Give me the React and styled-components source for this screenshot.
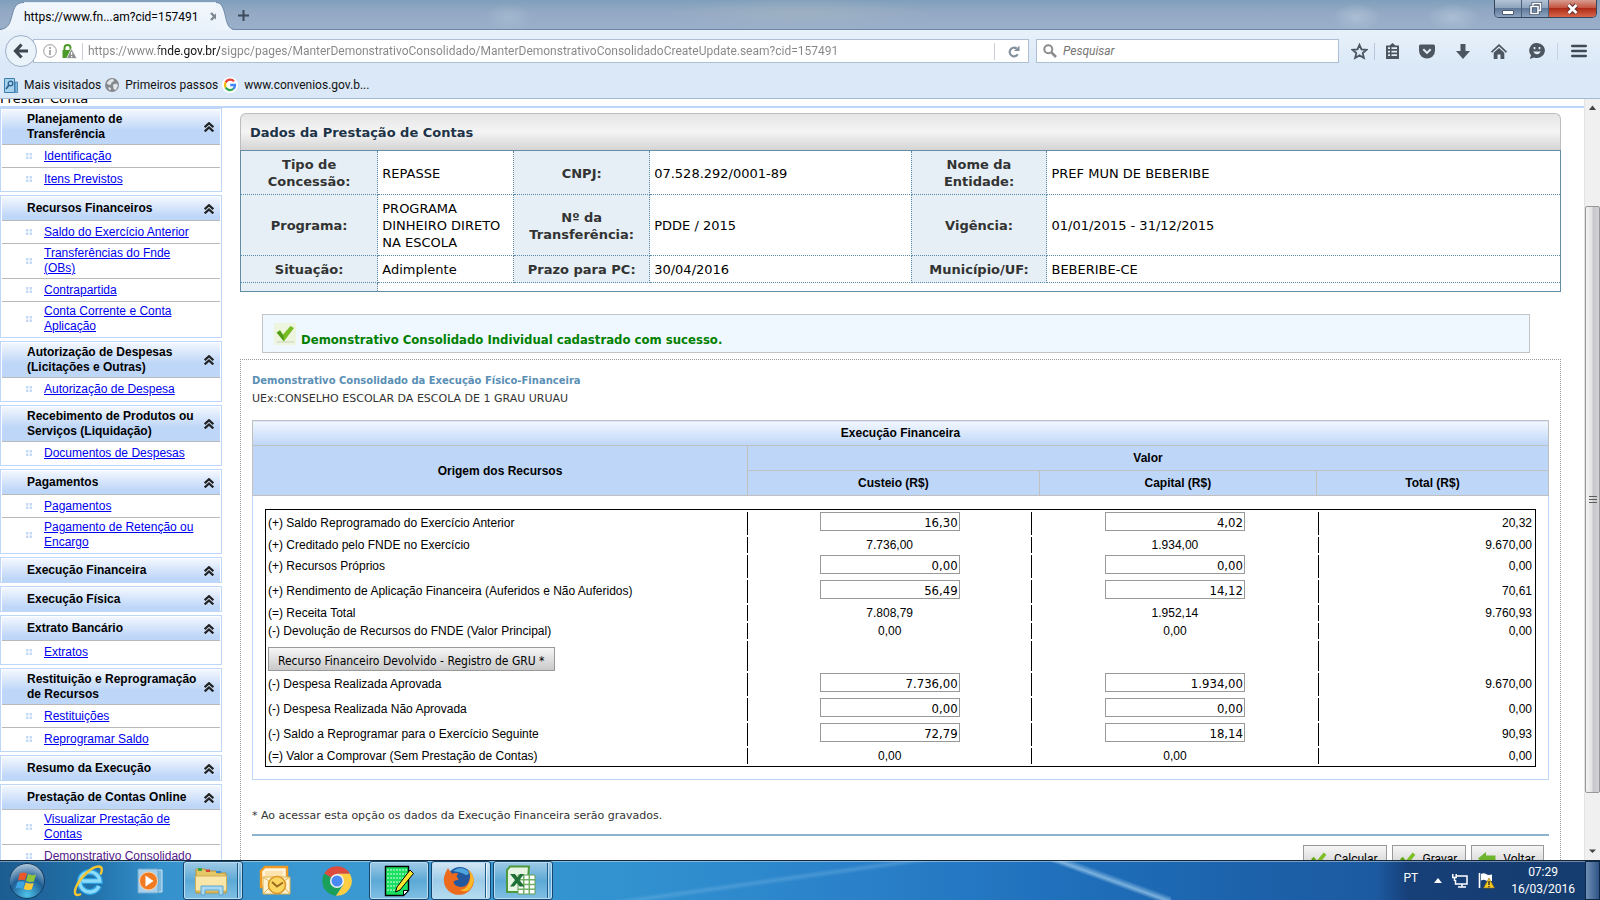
import React, { useState } from 'react';
import styled, { createGlobalStyle, css } from 'styled-components';

const ui = '"Roboto", "Open Sans", sans-serif';
const arial = '"Liberation Sans", Arial, sans-serif';
const verdana = '"DejaVu Sans", Verdana, sans-serif';
const tahoma = '"DejaVu Sans Condensed", "DejaVu Sans", Tahoma, sans-serif';

const GlobalStyle = createGlobalStyle`
  * {
    box-sizing: border-box;
  }
  body {
    margin: 0;
    background: #fff;
    font-family: ${arial};
    font-size: 12px;
    color: #000;
  }
  button, input {
    font: inherit;
    color: inherit;
    margin: 0;
  }
`;

const Screen = styled.div`
  display: flex;
  flex-direction: column;
  height: 100vh;
  overflow: hidden;
`;

/* browser window */

const TitleBar = styled.header`
  display: flex;
  flex: none;
  height: 30px;
  border-bottom: 1px solid #6d87a4;
  background:
    radial-gradient(ellipse 24px 14px at 31.8% 60%, #aec4d880, transparent),
    radial-gradient(ellipse 130px 16px at 50% 45%, #a2b4c2aa, transparent),
    radial-gradient(ellipse 24px 14px at 84.8% 60%, #b4c8daaa, transparent),
    radial-gradient(ellipse 26px 14px at 90.8% 60%, #b4c8daaa, transparent),
    linear-gradient(#7f9fbc, #93a9c3 40%, #9bb0cb);
  font-family: ${ui};
`;

const TabStrip = styled.div`
  display: flex;
  flex: 1;
`;

const Tab = styled.div`
  display: flex;
  height: 30px;
`;

const TabBody = styled.div`
  display: flex;
  align-items: center;
  gap: 12px;
  width: 192px;
  margin-top: 2px;
  border-top: 1px solid #dfe9f5;
  background: linear-gradient(#f2f7fc, #e8f1fa);
  white-space: nowrap;
`;

const TabTitle = styled.span`
  flex: 1;
`;

const PlainButton = styled.button`
  display: flex;
  align-items: center;
  justify-content: center;
  padding: 0;
  border: 0;
  background: none;
  cursor: pointer;
`;

const NewTab = styled(PlainButton)`
  width: 18px;
  height: 30px;
`;

const WindowButtons = styled.div`
  display: flex;
  height: 18px;
  margin-right: 3px;
  border: 1px solid #33465c;
  border-top: 0;
  border-radius: 0 0 5px 5px;
  overflow: hidden;
`;

const WindowButton = styled(PlainButton)`
  width: ${({ $close }) => ($close ? '47px' : '27px')};
  border-right: ${({ $close }) => ($close ? '0' : '1px solid #4b5f78')};
  background: ${({ $close }) => ($close
    ? 'linear-gradient(#d79d90, #c4503c 48%, #ae2b17 50%, #d8664a)'
    : 'linear-gradient(#b4c3d6, #8da2bc 48%, #60799a 50%, #8ea4bf)')};
`;

const Toolbars = styled.div`
  flex: none;
  border-bottom: 1px solid #a3b8d3;
  background: linear-gradient(#e8f1fa, #dae8f7 55%);
  font-family: ${ui};
`;

const NavBar = styled.div`
  display: flex;
  align-items: center;
  height: 42px;
  padding-left: 5px;
`;

const BackButton = styled(PlainButton)`
  flex: none;
  width: 32px;
  height: 32px;
  border: 1px solid #9db0c9;
  border-radius: 50%;
  background: #eaf2fa;
  z-index: 1;
`;

const Field = styled.div`
  display: flex;
  align-items: center;
  height: 24px;
  border: 1px solid #aebfd4;
  background: #fff;
`;

const UrlField = styled(Field)`
  flex: 1;
  gap: 5px;
  margin-left: -4px;
  padding-left: 9px;
`;

const Split = styled.span`
  width: 1px;
  height: 17px;
  background: ${({ $color }) => $color || '#c9ced6'};
`;

const UrlInput = styled.input`
  flex: 1;
  min-width: 0;
  padding: 0;
  border: 0;
  outline: 0;
  font-size: 12px;
  color: transparent;
  background: linear-gradient(90deg, #858585 71px, #111 71px 132px, #858585 132px);
  background-clip: text;
`;

const ReloadButton = styled(PlainButton)`
  width: 28px;
  height: 22px;
`;

const SearchField = styled(Field)`
  flex: none;
  width: 19%;
  gap: 6px;
  margin: 0 5px 0 7px;
  padding-left: 6px;
`;

const SearchInput = styled.input`
  flex: 1;
  min-width: 0;
  padding: 0;
  border: 0;
  outline: 0;
  font-size: 12px;
  &::placeholder {
    color: #757575;
    font-style: italic;
    opacity: 1;
  }
`;

const ToolButton = styled(PlainButton)`
  flex: none;
  width: ${({ $w }) => $w || 36}px;
  height: 24px;
`;

const Bookmarks = styled.nav`
  display: flex;
  gap: 4px;
  height: 26px;
  padding: 0 4px;
  align-items: center;
`;

const Bookmark = styled.a`
  display: flex;
  align-items: center;
  gap: 6px;
  color: #111;
  text-decoration: none;
  white-space: nowrap;
`;

/* page */

const Viewport = styled.div`
  display: flex;
  flex: 1;
  min-height: 0;
`;

const Page = styled.div`
  flex: 1;
  min-width: 0;
  overflow: hidden;
`;

const Crumb = styled.div`
  display: flex;
  align-items: flex-end;
  height: 9px;
  overflow: hidden;
  border-bottom: 2px solid #bed6f8;
  font-family: ${verdana};
  font-size: 13px;
  line-height: 15px;
`;

const Columns = styled.div`
  display: flex;
  align-items: flex-start;
`;

const Sidebar = styled.nav`
  flex: none;
  width: 222px;
  line-height: 15px;
`;

const Group = styled.section`
  margin-bottom: 3px;
  padding: 1px 1px ${({ $empty }) => ($empty ? '0' : '1px')};
  border: 1px solid #bed6f8;
`;

const GroupHeader = styled.button`
  display: flex;
  align-items: center;
  justify-content: space-between;
  width: 100%;
  padding: ${({ $tall }) => ($tall ? '2px' : '4px')} 6px ${({ $tall }) => ($tall ? '2px' : '4px')} 25px;
  border: 0;
  background: linear-gradient(#f2f7ff, #bed6f8 ${({ $tall }) => ($tall ? '60%' : '85%')});
  font-weight: bold;
  text-align: left;
  cursor: pointer;
`;

const MenuList = styled.ul`
  margin: 0;
  padding: 0;
  list-style: none;
`;

const MenuItem = styled.li`
  display: flex;
  align-items: center;
  gap: 12px;
  min-height: 23px;
  padding: 2px 14px 2px 24px;
  border-top: 1px solid #b9b9b9;
`;

const MenuLink = styled.a`
  color: ${({ $visited }) => ($visited ? '#551a8b' : '#0000ee')};
  text-decoration: underline;
`;

const Main = styled.main`
  flex: 1;
  min-width: 0;
  padding: 5px 23px 0 18px;
`;

const PanelTitle = styled.h1`
  height: 37px;
  margin: 0;
  padding: 0 9px;
  border: 1px solid #bdbdbd;
  border-bottom: 0;
  border-radius: 6px 6px 0 0;
  background: linear-gradient(#e6e6e6, #f4f4f4 50%, #d4d4d4);
  color: #1d3347;
  font: bold 13px/37px ${verdana};
`;

const InfoTable = styled.table`
  width: 100%;
  table-layout: fixed;
  border-collapse: collapse;
  border: 1px solid #648ca5;
  font: 13px/17px ${verdana};

  th, td {
    padding: 5px 4px 4px;
    border: 1px dotted #5a8bad;
  }
  th {
    background: #e5eff5;
    color: #333;
  }
  tr:last-child th, tr:last-child td {
    height: 9px;
    padding: 0;
  }
`;

const Notice = styled.div`
  display: flex;
  align-items: center;
  gap: 5px;
  height: 39px;
  margin: 22px 31px 6px 22px;
  padding: 0 11px;
  border: 1px solid #c4c4c4;
  background: #f0f8ff;
  color: #008000;
  font: bold 13px/16px ${tahoma};

  p {
    margin: 12px 0 0;
  }
`;

const Sheet = styled.section`
  padding: 12px 11px 30px;
  border: 1px dotted #999;
`;

const SheetTitle = styled.h2`
  margin: 0;
  color: #5a8fb5;
  font: bold 10px/18px ${verdana};
`;

const Small = styled.p`
  margin: 0;
  color: #333;
  font: 11px/18px ${verdana};
`;

const HeadTable = styled.table`
  width: 100%;
  margin-top: 12px;
  table-layout: fixed;
  border-collapse: collapse;

  > thead > tr > th {
    height: 25px;
    padding: 0;
    border: 1px solid #c0c0c0;
    background: #bed6f8;
  }
  > thead > tr:first-child > th {
    background: linear-gradient(#f2f7ff, #bed6f8);
  }
  > tbody > tr > td {
    padding: 13px 12px 12px;
    border: 1px solid #bed6f8;
  }
`;

const Ledger = styled.table`
  width: 100%;
  table-layout: fixed;
  border: 1px solid #000;
  border-spacing: 2px;
  line-height: 15px;
`;

const Line = styled.tr`
  height: ${({ $h }) => $h}px;
`;

const Label = styled.th`
  padding: 0;
  font-weight: normal;
  text-align: left;
  vertical-align: ${({ $bottom }) => ($bottom ? 'bottom' : 'middle')};
`;

const Amount = styled.td`
  padding: 0 1px 0 3px;
  border-left: 1px solid #000;
  text-align: ${({ $right }) => ($right ? 'right' : 'center')};
  vertical-align: ${({ $top }) => ($top ? 'top' : 'middle')};
`;

const AmountInput = styled.input`
  display: block;
  width: 140px;
  height: 19px;
  margin: 0 auto;
  padding: 1px 1px 0;
  border: 1px solid #999;
  background: #fff;
  font-family: ${tahoma};
  font-size: 13px;
  text-align: right;
`;

const grey = css`
  border: 1px solid #999;
  background: linear-gradient(#f6f6f6, #c9c9c9);
  font-size: 12px;
  white-space: nowrap;
  cursor: pointer;
`;

const GruButton = styled.button`
  ${grey}
  display: block;
  height: 24px;
  padding: 4px 9px 0;
  font-family: ${tahoma};
`;

const Footnote = styled(Small)`
  margin-top: 27px;
  padding-bottom: 9px;
  border-bottom: 2px solid #8cb3ce;
`;

const Actions = styled.div`
  display: flex;
  justify-content: flex-end;
  gap: 5px;
  padding: 9px 5px 0;
`;

const ActionButton = styled.button`
  ${grey}
  display: flex;
  align-items: center;
  gap: 7px;
  height: 28px;
  padding: 0 8px 0 6px;
  font-family: ${ui};
`;

const ScrollBar = styled.div`
  display: flex;
  flex: none;
  flex-direction: column;
  width: 16px;
  border-left: 1px solid #e3e3e3;
  background: #f0f0f0;
`;

const Track = styled.div`
  flex: ${({ $grow }) => $grow} 1 0;
`;

const Thumb = styled.div`
  display: flex;
  flex: 587 1 0;
  align-items: center;
  justify-content: center;
  border: 1px solid #979797;
  border-radius: 2px;
  background: linear-gradient(90deg, #f4f4f4, #e2e2e4 45%, #c8c8cc 55%, #d2d2d6);
`;

/* taskbar */

const TaskBar = styled.footer`
  display: flex;
  flex: none;
  gap: 2px;
  height: 40px;
  border-top: 1px solid #14263a;
  box-shadow: inset 0 1px 0 #ffffff66;
  background:
    linear-gradient(20deg, transparent 46%, #a9d4f1aa 51%, transparent 58%) 71% 0 / 120px 40px no-repeat,
    linear-gradient(172deg, transparent 46%, #7cbbe655 50%, transparent 54%) 560px 0 / 420px 40px no-repeat,
    linear-gradient(90deg, #1c5c90, #2273ac 6%, #3692cc 10%, #3b99d2 22%, #3293d0 38%, #2a80c9 54%, #1f6fbb 67%, #1c62ab 78%, #1c5aa0 86%, #174079 88%, #153c6d);
  color: #fff;
  font-family: ${ui};
`;

const StartButton = styled(PlainButton)`
  width: 57px;
`;

const TaskButton = styled(PlainButton)`
  width: 60px;
  ${({ $open }) => $open && css`
    border: 1px solid #17466c;
    border-radius: 3px;
    box-shadow: inset 0 0 0 1px #b9dcf2;
    background: linear-gradient(#9fcbe6, #5ca9d6 50%, #7fc0e4);
  `}
  ${({ $stack }) => $stack && css`
    padding-right: 5px;
    background: linear-gradient(90deg, transparent 53px, #1f5d88 53px 54px, #b9dcf2 54px 55px, transparent 55px),
      linear-gradient(#9fcbe6, #5ca9d6 50%, #7fc0e4);
  `}
  ${({ $active }) => $active && css`
    background: linear-gradient(90deg, transparent 53px, #1f5d88 53px 54px, #e5f3fb 54px 55px, transparent 55px),
      linear-gradient(#d4e8f5, #9dcbe8 50%, #b5dcf0);
  `}
`;

const Tray = styled.div`
  display: flex;
  align-items: center;
  gap: 10px;
  margin-left: auto;
`;

const Language = styled.span`
  padding: 0 6px 6px 0;
`;

const Clock = styled.time`
  padding-left: 6px;
  line-height: 17px;
  text-align: center;
`;

const ShowDesktop = styled.button`
  width: 15px;
  height: 39px;
  padding: 0;
  border: 1px solid #0d2747;
  background: linear-gradient(90deg, #6f8fb5, #2f5585);
`;

const menu = [
  { title: ['Planejamento de', 'Transferência'], items: [['Identificação'], ['Itens Previstos']] },
  {
    title: ['Recursos Financeiros'],
    items: [['Saldo do Exercício Anterior'], ['Transferências do Fnde', '(OBs)'], ['Contrapartida'], ['Conta Corrente e Conta', 'Aplicação']],
  },
  { title: ['Autorização de Despesas', '(Licitações e Outras)'], items: [['Autorização de Despesa']] },
  { title: ['Recebimento de Produtos ou', 'Serviços (Liquidação)'], items: [['Documentos de Despesas']] },
  { title: ['Pagamentos'], items: [['Pagamentos'], ['Pagamento de Retenção ou', 'Encargo']] },
  { title: ['Execução Financeira'], items: [] },
  { title: ['Execução Física'], items: [] },
  { title: ['Extrato Bancário'], items: [['Extratos']] },
  { title: ['Restituição e Reprogramação', 'de Recursos'], items: [['Restituições'], ['Reprogramar Saldo']] },
  { title: ['Resumo da Execução'], items: [] },
  {
    title: ['Prestação de Contas Online'],
    items: [['Visualizar Prestação de', 'Contas'], ['Demonstrativo Consolidado']],
    visited: 1,
  },
];

const ledger = [
  { label: '(+) Saldo Reprogramado do Exercício Anterior', values: ['16,30', '4,02', '20,32'], edit: true },
  { label: '(+) Creditado pelo FNDE no Exercício', values: ['7.736,00', '1.934,00', '9.670,00'] },
  { label: '(+) Recursos Próprios', values: ['0,00', '0,00', '0,00'], edit: true },
  { label: '(+) Rendimento de Aplicação Financeira (Auferidos e Não Auferidos)', values: ['56,49', '14,12', '70,61'], edit: true },
  { label: '(=) Receita Total', values: ['7.808,79', '1.952,14', '9.760,93'] },
  { label: '(-) Devolução de Recursos do FNDE (Valor Principal)', values: ['0,00', '0,00', '0,00'] },
  { button: 'Recurso Financeiro Devolvido - Registro de GRU *', values: ['', '', ''] },
  { label: '(-) Despesa Realizada Aprovada', values: ['7.736,00', '1.934,00', '9.670,00'], edit: true },
  { label: '(-) Despesa Realizada Não Aprovada', values: ['0,00', '0,00', '0,00'], edit: true },
  { label: '(-) Saldo a Reprogramar para o Exercício Seguinte', values: ['72,79', '18,14', '90,93'], edit: true },
  { label: '(=) Valor a Comprovar (Sem Prestação de Contas)', values: ['0,00', '0,00', '0,00'] },
];

const lines = (parts) => parts.map((part, i) => (
  <React.Fragment key={part}>
    {i > 0 && <br />}
    {part}
  </React.Fragment>
));

const Chevrons = () => (
  <svg width="10" height="10" viewBox="0 0 10 10" fill="none" stroke="#222" strokeWidth="2.200">
    <path d="M.7 5.2 5 1.2l4.3 4M.7 9.4 5 5.4l4.3 4" />
  </svg>
);

const Dots = () => (
  <svg width="6" height="6" viewBox="0 0 6 6" fill="#c3d9f7">
    <path d="M0 0h2.4v2.4H0zM3.6 0H6v2.4H3.6zM0 3.6h2.4V6H0zM3.6 3.6H6V6H3.6z" />
  </svg>
);

const Check = ({ size = 18 }) => (
  <svg width={size} height={size} viewBox="0 0 18 18">
    <path d="M1 8.5 4.2 6l3.2 4L14.5 1.5 17.3 4 7.6 16.5z" fill="#7cc025" />
    <path d="M1.8 8.6 4 7l3.4 4.4L7.6 16z" fill="#58a01c" />
  </svg>
);

const BackArrow = () => (
  <svg width="18" height="16" viewBox="0 0 18 16">
    <path d="M0 7.5 8 1v3.5h9.5v8H8V15z" fill="#6db52c" />
  </svg>
);

function SideMenu() {
  const [closed, setClosed] = useState({});
  const toggle = (key) => setClosed({ ...closed, [key]: !closed[key] });

  return (
    <Sidebar>
      {menu.map(({ title, items, visited }) => {
        const key = title[0];
        const shown = closed[key] ? [] : items;
        return (
          <Group key={key} $empty={!shown.length}>
            <GroupHeader type="button" $tall={title.length > 1} onClick={() => toggle(key)}>
              <span>{lines(title)}</span>
              <Chevrons />
            </GroupHeader>
            {shown.length > 0 && (
              <MenuList>
                {shown.map((item, i) => (
                  <MenuItem key={item[0]}>
                    <Dots />
                    <MenuLink href="#" $visited={visited === i}>{lines(item)}</MenuLink>
                  </MenuItem>
                ))}
              </MenuList>
            )}
          </Group>
        );
      })}
    </Sidebar>
  );
}

function LedgerRow({ label, button, values, edit }) {
  let height = 16;
  if (edit) height = 23;
  if (button) height = 30;
  const columns = ['Custeio', 'Capital'];

  return (
    <Line $h={height}>
      <Label scope="row" $bottom={!!button}>
        {button ? <GruButton type="button">{button}</GruButton> : label}
      </Label>
      {columns.map((column, i) => (
        <Amount key={column} $top={edit}>
          {edit
            ? <AmountInput type="text" aria-label={`${label} - ${column}`} defaultValue={values[i]} />
            : values[i]}
        </Amount>
      ))}
      <Amount $right>{values[2]}</Amount>
    </Line>
  );
}

function Browser() {
  return (
    <>
      <TitleBar>
        <TabStrip>
          <Tab>
            <svg width="24" height="30" viewBox="0 0 24 30">
              <path d="M0 30C10 28 10 22 13 12 15 5 18 2.5 24 2.5V30z" fill="#edf4fb" />
              <path d="M0 29.500C10 28 10 22 13 12 15 5 18 2.500 24 2.500" fill="none" stroke="#7089a6" />
            </svg>
            <TabBody>
              <TabTitle>https://www.fn...am?cid=157491</TabTitle>
              <PlainButton type="button" aria-label="Fechar aba">
                <svg width="9" height="9" viewBox="0 0 9 9" stroke="#7d8791" strokeWidth="2.400">
                  <path d="M1 1l7 7M8 1 1 8" />
                </svg>
              </PlainButton>
            </TabBody>
            <svg width="18" height="30" viewBox="0 0 18 30">
              <path d="M0 2.500c5 0 7 4 9 12 2 9 3 14 9 15.500H0z" fill="#edf4fb" />
              <path d="M0 2.500c5 0 7 4 9 12 2 9 3 13.500 9 15" fill="none" stroke="#7089a6" />
            </svg>
          </Tab>
          <NewTab type="button" aria-label="Nova aba">
            <svg width="11" height="11" viewBox="0 0 11 11" stroke="#3c4a59" strokeWidth="2">
              <path d="M5.500 0v11M0 5.500h11" />
            </svg>
          </NewTab>
        </TabStrip>
        <WindowButtons>
          <WindowButton type="button" aria-label="Minimizar">
            <svg width="12" height="14" viewBox="0 0 12 14"><path d="M.5 8.500h11v4H.5z" fill="#fff" stroke="#4a5a70" /></svg>
          </WindowButton>
          <WindowButton type="button" aria-label="Restaurar">
            <svg width="13" height="13" viewBox="0 0 13 13" fill="none">
              <path d="M4 3.500V1.500h7.500v7h-2M2 4.500h7v7H2z" stroke="#3f5068" strokeWidth="3" />
              <path d="M4 3.500V1.500h7.500v7h-2M2 4.500h7v7H2z" stroke="#fff" strokeWidth="1.600" />
            </svg>
          </WindowButton>
          <WindowButton type="button" aria-label="Fechar" $close>
            <svg width="13" height="12" viewBox="0 0 13 12">
              <path d="M2.500 2l8 8M10.500 2l-8 8" stroke="#5b2a2a" strokeWidth="4.600" />
              <path d="M2.500 2l8 8M10.500 2l-8 8" stroke="#fff" strokeWidth="2.800" />
            </svg>
          </WindowButton>
        </WindowButtons>
      </TitleBar>
      <Toolbars>
        <NavBar>
          <BackButton type="button" aria-label="Voltar uma página">
            <svg width="16" height="16" viewBox="0 0 16 16" fill="none" stroke="#3d4650" strokeWidth="3.200">
              <path d="M8.500 1.500 2.500 8l6 6.500M2.500 8H15" />
            </svg>
          </BackButton>
          <UrlField>
            <svg width="14" height="14" viewBox="0 0 14 14" fill="none" stroke="#999">
              <circle cx="7" cy="7" r="6.300" />
              <path d="M7 6v5M7 3v2" strokeWidth="1.600" />
            </svg>
            <svg width="15" height="15" viewBox="0 0 15 15">
              <path d="M2.500 7V4a3 3 0 0 1 6 0v3" fill="none" stroke="#4c9a2a" strokeWidth="2" />
              <path d="M.5 6h9.500v8H.5z" fill="#4c9a2a" />
              <path d="M9.500 4.500 15 14.500H4.500z" fill="#8f8f8f" stroke="#fff" strokeWidth=".7" />
              <path d="M9.600 8v3M9.600 12v1.300" stroke="#fff" strokeWidth="1.200" />
            </svg>
            <Split />
            <UrlInput
              type="text"
              aria-label="Endereço"
              defaultValue="https://www.fnde.gov.br/sigpc/pages/ManterDemonstrativoConsolidado/ManterDemonstrativoConsolidadoCreateUpdate.seam?cid=157491"
            />
            <Split />
            <ReloadButton type="button" aria-label="Recarregar">
              <svg width="12" height="13" viewBox="0 0 12 13">
                <path d="M9.700 9.200A4.300 4.300 0 1 1 8.500 3.500" fill="none" stroke="#848f9c" strokeWidth="2.200" />
                <path d="M11.500.5v5.500H6z" fill="#848f9c" />
              </svg>
            </ReloadButton>
          </UrlField>
          <SearchField>
            <svg width="14" height="14" viewBox="0 0 14 14" fill="none" stroke="#8d8d8d">
              <circle cx="5.300" cy="5.300" r="4" strokeWidth="2" />
              <path d="M8.500 8.500 13 13" strokeWidth="2.600" />
            </svg>
            <SearchInput type="text" aria-label="Pesquisar" placeholder="Pesquisar" />
          </SearchField>
          <ToolButton type="button" aria-label="Favoritar" $w={30}>
            <svg width="17" height="17" viewBox="0 0 17 17" fill="none" stroke="#4b5660" strokeWidth="1.800">
              <path d="m8.500 1.800 2 4.600 5 .4-3.800 3.300 1.200 4.900-4.400-2.600-4.400 2.600 1.200-4.900L1.500 6.800l5-.4z" />
            </svg>
          </ToolButton>
          <Split $color="#b7c6d8" />
          <ToolButton type="button" aria-label="Lista de favoritos" $w={34}>
            <svg width="15" height="16" viewBox="0 0 15 16">
              <path d="M4.500 2.500 7.500 0l3 2.500H14V16H1V2.500z" fill="#4b5660" />
              <path d="M3 5.200h2M3 8.700h2M3 12.200h2M6.500 5.200h5.500M6.500 8.700h5.500M6.500 12.200h5.500" stroke="#e4edf7" strokeWidth="1.700" />
            </svg>
          </ToolButton>
          <ToolButton type="button" aria-label="Salvar no Pocket">
            <svg width="16" height="15" viewBox="0 0 16 15">
              <path d="M1.500.5h13Q16 .5 16 2v4.500a8 8 0 0 1-16 0V2Q0 .5 1.500.5z" fill="#4b5660" />
              <path d="m4.300 5.300 3.700 3.600 3.700-3.600" fill="none" stroke="#e4edf7" strokeWidth="2" />
            </svg>
          </ToolButton>
          <ToolButton type="button" aria-label="Downloads">
            <svg width="14" height="15" viewBox="0 0 14 15"><path d="M4.500 0h5v7H14l-7 8-7-8h4.500z" fill="#4b5660" /></svg>
          </ToolButton>
          <ToolButton type="button" aria-label="Página inicial">
            <svg width="16" height="15" viewBox="0 0 16 15">
              <path d="M.5 8.200 8 1.200l7.500 7" fill="none" stroke="#4b5660" strokeWidth="1.800" />
              <path d="M2.700 8.800 8 4l5.300 4.800V15H9.500v-4.500h-3V15H2.700z" fill="#4b5660" />
            </svg>
          </ToolButton>
          <ToolButton type="button" aria-label="Bate-papo" $w={40}>
            <svg width="16" height="16" viewBox="0 0 16 16">
              <path d="M8 0a8 7.500 0 1 1-3 14.500L.8 16l1.200-3.700A7.500 7.500 0 0 1 8 0z" fill="#4b5660" />
              <path d="M4 8.500q4 5.500 8 0z" fill="#e4edf7" />
              <path d="M5.500 4v2.200M10.500 4v2.200" stroke="#e4edf7" strokeWidth="1.700" />
            </svg>
          </ToolButton>
          <Split $color="#c4d2e3" />
          <ToolButton type="button" aria-label="Abrir menu" $w={42}>
            <svg width="16" height="14" viewBox="0 0 16 14" stroke="#3f4a55" strokeWidth="2.600" strokeLinecap="round">
              <path d="M1.300 2h13.400M1.300 7h13.400M1.300 12h13.400" />
            </svg>
          </ToolButton>
        </NavBar>
        <Bookmarks>
          <Bookmark href="#">
            <svg width="14" height="15" viewBox="0 0 14 15">
              <path d="M.5.500h10v14H.5z" fill="#a6d2ee" stroke="#3f7fae" />
              <path d="M11 4h2.500v10.500H11z" fill="#7eb6dc" stroke="#3f7fae" strokeWidth=".8" />
              <circle cx="6.500" cy="5.500" r="2.300" fill="none" stroke="#2a5f8d" strokeWidth="1.300" />
              <path d="m5 7-3 4" stroke="#2a5f8d" strokeWidth="1.600" />
            </svg>
            Mais visitados
          </Bookmark>
          <Bookmark href="#">
            <svg width="14" height="14" viewBox="0 0 14 14">
              <circle cx="7" cy="7" r="7" fill="#84898e" />
              <path d="M5 1.500 8 1l1 2-2.500 1.500L5.500 7 3 6.500 1.500 5zM8 6.500l3.500-1 1.500 2-2 4.500-2.500-1zM3.500 9l2.500 1-.5 2.500-2-1.500z" fill="#e3e6e9" />
            </svg>
            Primeiros passos
          </Bookmark>
          <Bookmark href="#">
            <svg width="16" height="16" viewBox="0 0 16 16" fill="none" strokeWidth="2.300">
              <circle cx="8" cy="8" r="8" fill="#fff" />
              <path d="M12 4.300A5.100 5.100 0 0 0 3.600 5.500" stroke="#ea4335" />
              <path d="M3.600 5.500a5.100 5.100 0 0 0 0 5" stroke="#fbbc05" />
              <path d="M3.600 10.500a5.100 5.100 0 0 0 7.700 1.400" stroke="#34a853" />
              <path d="M11.300 11.900A5 5 0 0 0 13 8H8.200" stroke="#4285f4" />
            </svg>
            www.convenios.gov.b...
          </Bookmark>
        </Bookmarks>
      </Toolbars>
    </>
  );
}

function AccountInfo() {
  return (
    <>
      <PanelTitle>Dados da Prestação de Contas</PanelTitle>
      <InfoTable>
        <colgroup>
          <col style={{ width: '10.4%' }} />
          <col style={{ width: '10.3%' }} />
          <col style={{ width: '10.3%' }} />
          <col style={{ width: '19.8%' }} />
          <col style={{ width: '10.3%' }} />
          <col />
        </colgroup>
        <tbody>
          <tr>
            <th scope="row">Tipo de Concessão:</th>
            <td>REPASSE</td>
            <th scope="row">CNPJ:</th>
            <td>07.528.292/0001-89</td>
            <th scope="row">Nome da Entidade:</th>
            <td>PREF MUN DE BEBERIBE</td>
          </tr>
          <tr>
            <th scope="row">Programa:</th>
            <td>PROGRAMA DINHEIRO DIRETO NA ESCOLA</td>
            <th scope="row">Nº da Transferência:</th>
            <td>PDDE / 2015</td>
            <th scope="row">Vigência:</th>
            <td>01/01/2015 - 31/12/2015</td>
          </tr>
          <tr>
            <th scope="row">Situação:</th>
            <td>Adimplente</td>
            <th scope="row">Prazo para PC:</th>
            <td>30/04/2016</td>
            <th scope="row">Município/UF:</th>
            <td>BEBERIBE-CE</td>
          </tr>
          <tr>
            <th />
            <td colSpan={5} />
          </tr>
        </tbody>
      </InfoTable>
    </>
  );
}

function Statement() {
  return (
    <Sheet>
      <SheetTitle>Demonstrativo Consolidado da Execução Físico-Financeira</SheetTitle>
      <Small>UEx:CONSELHO ESCOLAR DA ESCOLA DE 1 GRAU URUAU</Small>
      <HeadTable>
        <colgroup>
          <col style={{ width: '38.2%' }} />
          <col style={{ width: '22.5%' }} />
          <col style={{ width: '21.4%' }} />
          <col />
        </colgroup>
        <thead>
          <tr>
            <th colSpan={4}>Execução Financeira</th>
          </tr>
          <tr>
            <th rowSpan={2}>Origem dos Recursos</th>
            <th colSpan={3}>Valor</th>
          </tr>
          <tr>
            <th>Custeio (R$)</th>
            <th>Capital (R$)</th>
            <th>Total (R$)</th>
          </tr>
        </thead>
        <tbody>
          <tr>
            <td colSpan={4}>
              <Ledger>
                <colgroup>
                  <col style={{ width: '37.9%' }} />
                  <col style={{ width: '22.4%' }} />
                  <col style={{ width: '22.6%' }} />
                  <col />
                </colgroup>
                <tbody>
                  {ledger.map((row) => <LedgerRow key={row.label || row.button} {...row} />)}
                </tbody>
              </Ledger>
            </td>
          </tr>
        </tbody>
      </HeadTable>
      <Footnote>* Ao acessar esta opção os dados da Execução Financeira serão gravados.</Footnote>
      <Actions>
        <ActionButton type="button"><Check size={17} />Calcular</ActionButton>
        <ActionButton type="button"><Check size={17} />Gravar</ActionButton>
        <ActionButton type="button"><BackArrow />Voltar</ActionButton>
      </Actions>
    </Sheet>
  );
}

function Taskbar() {
  return (
    <TaskBar>
      <StartButton type="button" aria-label="Iniciar">
        <svg width="38" height="38" viewBox="0 0 38 38">
          <defs>
            <radialGradient id="orb" cx=".5" cy=".9" r=".9">
              <stop offset="0" stopColor="#4fc3ea" />
              <stop offset=".55" stopColor="#1f5f96" />
              <stop offset="1" stopColor="#b5cbdc" />
            </radialGradient>
          </defs>
          <circle cx="17" cy="19" r="17.500" fill="url(#orb)" stroke="#12395c" />
          <path d="M9.500 11.500q4-2 7.500 0l-2 7q-3-1.500-7 .200z" fill="#e8582b" />
          <path d="M18 12q3.500 2 8 .5l-2 7q-4 1.200-8-.5z" fill="#8fc43c" />
          <path d="M7.500 20q4-1.700 7.200 0l-2 6.500q-3-1.500-7-.2z" fill="#3fa4e4" />
          <path d="M15.700 20.500q3.800 1.800 8 .4l-2 6.500q-4 1.200-8-.5z" fill="#fbc935" />
        </svg>
      </StartButton>
      <TaskButton type="button" aria-label="Internet Explorer">
        <svg width="32" height="32" viewBox="0 0 32 32" fill="none">
          <path d="M26 21a10 10 0 1 1 .8-5H9" stroke="#2b9fe0" strokeWidth="6" />
          <path d="M26 21a10 10 0 1 1 .8-5H9" stroke="#8bdcfa" strokeWidth="3.400" />
          <path d="M8 29C2 32 0 28 4 20S19 1 26 1.500c4 .5 3 5 1.500 8" stroke="#f6c630" strokeWidth="2.400" />
        </svg>
      </TaskButton>
      <TaskButton type="button" aria-label="Windows Media Player">
        <svg width="28" height="26" viewBox="0 0 28 26">
          <path d="M20 2h5v22h-5z" fill="#7fb9dd" stroke="#cfe6f4" />
          <path d="M1 1h20v24H1z" fill="#a8d0ea" stroke="#6ea9d0" />
          <circle cx="11.500" cy="13" r="9" fill="#f07b22" stroke="#fbd3ad" />
          <path d="m8.500 7.500 8 5.500-8 5.500z" fill="#fff" />
        </svg>
      </TaskButton>
      <TaskButton type="button" aria-label="Windows Explorer" $open $stack>
        <svg width="34" height="32" viewBox="0 0 34 32">
          <path d="M2 4h9l1 2h10l1 2h9v20H2z" fill="#e6c766" stroke="#b8953a" />
          <path d="M4 3h4v3H4z" fill="#3aa64a" />
          <path d="M12 4.500h4V7h-4z" fill="#d8442f" />
          <path d="M22 6h5v2h-5z" fill="#3a86d0" />
          <path d="M1.500 11h31v15h-31z" fill="#f8e7a8" stroke="#cfae55" />
          <path d="M7 30V21h22v9h-4v-5H11v5z" fill="#a9d8f2" stroke="#5da3cf" />
        </svg>
      </TaskButton>
      <TaskButton type="button" aria-label="Outlook">
        <svg width="32" height="32" viewBox="0 0 32 32">
          <path d="M6 2h22v20H2V6z" fill="#fff4dc" stroke="#ee9a26" strokeWidth="2.400" />
          <path d="M6 6h18v6H6z" fill="#fde3b0" />
          <path d="M4 12h27v17H4z" fill="#fdf3d3" stroke="#e0b04a" />
          <path d="M4 12l13 9 14-9M4 29l9-9M31 29l-8-9" fill="none" stroke="#e0b04a" />
          <circle cx="18" cy="20" r="8.500" fill="#fcd662" stroke="#d9982a" strokeWidth="1.600" />
          <path d="m13 17 5 4.500 6-4" fill="none" stroke="#9c6a20" strokeWidth="2" />
        </svg>
      </TaskButton>
      <TaskButton type="button" aria-label="Chrome">
        <svg width="30" height="30" viewBox="0 0 30 30">
          <path d="M15 15 2.200 7.500A14.800 14.800 0 0 1 27.900 7.700H15z" fill="#dd4b3e" />
          <path d="M15 15 2.200 7.500A14.800 14.800 0 0 0 14 29.700l6.500-11z" fill="#1ba05c" />
          <path d="M15 7.700h12.900A14.800 14.800 0 0 1 14 29.700l7.300-11z" fill="#ffce43" />
          <circle cx="15" cy="15" r="7" fill="#f2f2f2" />
          <circle cx="15" cy="15" r="5.500" fill="#4a8af4" />
        </svg>
      </TaskButton>
      <TaskButton type="button" aria-label="Bloco de notas" $open>
        <svg width="30" height="32" viewBox="0 0 30 32">
          <path d="M1.500 1.500h23v24l-5 5h-18z" fill="#19e060" stroke="#000" strokeWidth="1.400" />
          <path d="M3 5h20M3 9h20M3 13h20M3 17h18M3 21h14M3 25h10" stroke="#d9ffe4" strokeDasharray="2 1" />
          <path d="m26 5 3.500 3.500L16 25l-4.500 2L13 22z" fill="#fbe52e" stroke="#000" />
          <path d="M19.500 30.500v-5h5z" fill="#fff" stroke="#000" />
        </svg>
      </TaskButton>
      <TaskButton type="button" aria-label="Firefox" $open $stack $active>
        <svg width="32" height="32" viewBox="0 0 32 32">
          <circle cx="17" cy="15" r="13" fill="#23589f" />
          <path d="M10 6q8-6 15 0 2 4-2 4-5-3-13-4z" fill="#4fa6dc" />
          <path d="M5 3q-5 8-4 14a15 14.500 0 0 0 29.800 0Q31 9 25 4.500 28 9 26.500 14 25 21.500 18.500 22 11 21.500 10.500 16.500q2-2 5-1.500-.5-2.500-2-3.500 1-2 2-3Q11 7.500 9.500 9 6.500 6.500 5 3z" fill="#ec6a1e" />
          <path d="M30.800 16q-.5-7-5.800-11.500Q29 11 26 18q-3 7-9 7 10 5 13.800-9z" fill="#fbb829" />
        </svg>
      </TaskButton>
      <TaskButton type="button" aria-label="Excel" $open $stack>
        <svg width="32" height="32" viewBox="0 0 32 32">
          <path d="M5 1.500h19L22 27H2V5z" fill="#e9f5e3" stroke="#4c9a3c" strokeWidth="2" />
          <path d="M13 10h17v19H13z" fill="#fff" stroke="#5e9e54" />
          <path d="M13 14.700h17M13 19.500h17M13 24.300h17M18.700 10v19M24.300 10v19" stroke="#6fae63" strokeWidth="1.500" />
          <path d="M5 9h5l2.500 3.500L15 9h4l-4.500 6 5 6.500h-5L12 18l-3 3.500H5L10 15z" fill="#1f7036" />
        </svg>
      </TaskButton>
      <Tray>
        <Language>PT</Language>
        <svg width="8" height="5" viewBox="0 0 8 5"><path d="M4 0l4 5H0z" fill="#fff" /></svg>
        <svg width="16" height="15" viewBox="0 0 16 15" fill="none" stroke="#fff" strokeWidth="1.500">
          <path d="M5 3h10v8H3.500V7M6 14h8M10 11v3M.8 1v3.500h3.400V1M2.500 4.500V8" />
        </svg>
        <svg width="17" height="17" viewBox="0 0 17 17">
          <path d="M1.500 1v15" stroke="#fff" strokeWidth="1.600" />
          <path d="M3 2q3-1.500 5 0t6 .5V9q-4 1-6-.5T3 8.500z" fill="#fff" />
          <path d="m11 6 5.500 10h-11z" fill="#f5c926" stroke="#8a6a0c" strokeWidth=".6" />
          <path d="M11 9v4M11 14v1.300" stroke="#222" strokeWidth="1.300" />
        </svg>
        <Clock>
          07:29
          <br />
          16/03/2016
        </Clock>
        <ShowDesktop type="button" aria-label="Mostrar área de trabalho" />
      </Tray>
    </TaskBar>
  );
}

export default function App() {
  return (
    <Screen>
      <GlobalStyle />
      <Browser />
      <Viewport>
        <Page>
          <Crumb>Prestar Conta</Crumb>
          <Columns>
            <SideMenu />
            <Main>
              <AccountInfo />
              <Notice>
                <svg width="22" height="22" viewBox="0 0 22 22">
                  <path d="M0 0h22v22H0z" fill="#edf5df" />
                  <path d="M3 18.500h17v1H3z" fill="#c9d0c0" />
                  <path d="M2.500 9.500 6 7l3 4.500L16.500 3 20 5 9.800 18.500z" fill="#78bb22" />
                  <path d="M3 9.500 6 8l3.500 5 .3 5z" fill="#4d9a1a" />
                </svg>
                <p>Demonstrativo Consolidado Individual cadastrado com sucesso.</p>
              </Notice>
              <Statement />
            </Main>
          </Columns>
        </Page>
        <ScrollBar>
          <svg width="15" height="17" viewBox="0 0 15 17"><path d="M7.500 6.500 11 11H4z" fill="#444" /></svg>
          <Track $grow={90} />
          <Thumb>
            <svg width="8" height="9" viewBox="0 0 8 9" stroke="#5c5c5c"><path d="M0 1.500h8M0 4.500h8M0 7.500h8" /></svg>
          </Thumb>
          <Track $grow={50} />
          <svg width="15" height="17" viewBox="0 0 15 17"><path d="M7.500 10 4 6.500h7z" fill="#444" /></svg>
        </ScrollBar>
      </Viewport>
      <Taskbar />
    </Screen>
  );
}
